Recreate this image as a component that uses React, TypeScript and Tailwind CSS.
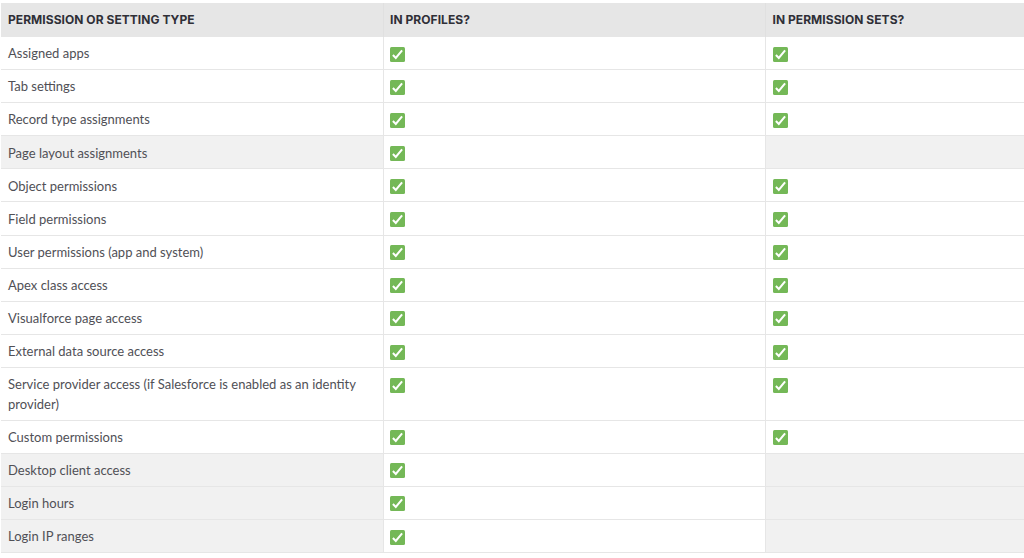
import React from "react";

const rows: { label: string; permSet: boolean; tall?: boolean }[] = [
  { label: "Assigned apps", permSet: true },
  { label: "Tab settings", permSet: true },
  { label: "Record type assignments", permSet: true },
  { label: "Page layout assignments", permSet: false },
  { label: "Object permissions", permSet: true },
  { label: "Field permissions", permSet: true },
  { label: "User permissions (app and system)", permSet: true },
  { label: "Apex class access", permSet: true },
  { label: "Visualforce page access", permSet: true },
  { label: "External data source access", permSet: true },
  { label: "Service provider access (if Salesforce is enabled as an identity provider)", permSet: true, tall: true },
  { label: "Custom permissions", permSet: true },
  { label: "Desktop client access", permSet: false },
  { label: "Login hours", permSet: false },
  { label: "Login IP ranges", permSet: false },
];

function CheckIcon() {
  return (
    <svg width="15" height="15" viewBox="0 0 15 15" className="block">
      <rect width="15" height="15" rx="1.5" fill="#74b857" />
      <path d="M2.9 8 L5.8 11 L12.1 3.4" fill="none" stroke="#ffffff" strokeWidth="2" />
    </svg>
  );
}

export default function App() {
  return (
    <div className="w-[1024px] h-[558px] overflow-hidden bg-white pt-[3px] pl-[1px] font-['Lato',sans-serif] text-[13px] text-[#505056]">
      <div className="grid h-[34px] grid-cols-[382.5px_382px_1fr] bg-[#e6e6e6] font-['Inter',sans-serif] text-[12px] font-bold leading-[20px] tracking-[0.05px] text-[#2f2f37]">
        <div className="border-r border-[#e0e0e0] pl-[7px] pt-[7px]">PERMISSION OR SETTING TYPE</div>
        <div className="border-r border-[#e0e0e0] pl-[6.5px] pt-[7px]">IN PROFILES?</div>
        <div className="pl-[7px] pt-[7px]">IN PERMISSION SETS?</div>
      </div>
      {rows.map((row) => (
        <div
          key={row.label}
          className={`grid grid-cols-[382.5px_382px_1fr] border-b border-[#e6e6e6] ${row.tall ? "h-[52.6px]" : "h-[33.1px]"}`}
        >
          <div className={`border-r border-[#e6e6e6] pl-[7px] pr-[20px] pt-[6.25px] leading-[20px] ${row.permSet ? "" : "bg-[#f1f1f1]"}`}>
            {row.label}
          </div>
          <div className="border-r border-[#e6e6e6] pl-[6.5px] pt-[9.7px]">
            <CheckIcon />
          </div>
          <div className={`pl-[7px] pt-[9.7px] ${row.permSet ? "" : "bg-[#f1f1f1]"}`}>
            {row.permSet && <CheckIcon />}
          </div>
        </div>
      ))}
    </div>
  );
}
